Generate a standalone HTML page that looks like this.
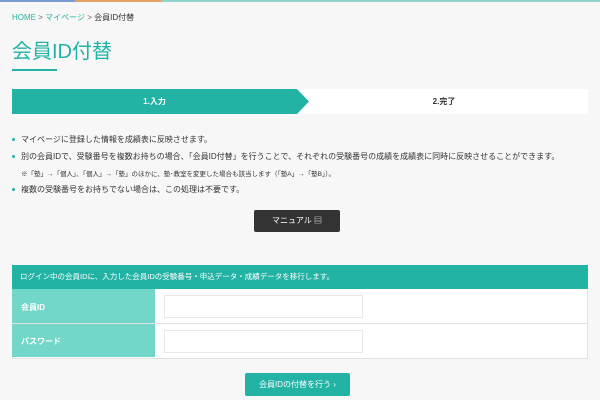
<html><head><style>
body{margin:0;width:600px;height:400px;background:#f7f7f7;font-family:"Liberation Sans","Noto Sans CJK JP",sans-serif;position:relative;overflow:hidden;color:#333}
.a{position:absolute}
.bul{position:absolute;left:21px;font-size:8px;white-space:nowrap}
.bul:before{content:"";position:absolute;left:-9px;top:4px;width:3px;height:3px;border-radius:50%;background:#22b3a5}
</style></head><body>
<div class="a" style="left:0;top:0;width:75px;height:2px;background:#7b9bd6"></div>
<div class="a" style="left:75px;top:0;width:86px;height:2px;background:#e8a068"></div>
<div class="a" style="left:161px;top:0;width:439px;height:2px;background:#8fd3cb"></div>
<div class="a" style="left:12px;top:12px;font-size:8px;color:#22b3a5;white-space:nowrap">HOME <span style="color:#666">&gt;</span> マイページ <span style="color:#666">&gt;</span> <span style="color:#333">会員ID付替</span></div>
<div class="a" style="left:12px;top:35px;font-size:20px;color:#22b3a5">会員ID付替</div>
<div class="a" style="left:12px;top:69px;width:45px;height:2px;background:#22b3a5"></div>
<div class="a" style="left:12px;top:89px;width:576px;height:25px;background:#fff"></div>
<svg class="a" style="left:12px;top:89px" width="298" height="25"><polygon points="0,0 285,0 297,12.5 285,25 0,25" fill="#22b3a5"/></svg>
<div class="a" style="left:12px;top:96px;width:285px;text-align:center;font-size:8px;font-weight:bold;color:#fff">1.入力</div>
<div class="a" style="left:300px;top:96px;width:288px;text-align:center;font-size:8px;font-weight:bold;color:#333">2.完了</div>
<div class="bul" style="top:134px">マイページに登録した情報を成績表に反映させます。</div>
<div class="bul" style="top:151px">別の会員IDで、受験番号を複数お持ちの場合、「会員ID付替」を行うことで、それぞれの受験番号の成績を成績表に同時に反映させることができます。</div>
<div class="a" style="left:21px;top:168px;font-size:6.5px;white-space:nowrap">※「塾」→「個人」、「個人」→「塾」のほかに、塾･教室を変更した場合も該当します（「塾A」→「塾B」）。</div>
<div class="bul" style="top:184px">複数の受験番号をお持ちでない場合は、この処理は不要です。</div>
<div class="a" style="left:254px;top:210px;width:86px;height:22px;background:#333;border-radius:2px;color:#fff;font-size:8px;text-align:center;line-height:22px">マニュアル ▤</div>
<div class="a" style="left:12px;top:265px;width:574px;height:92px;border:1px solid #e2e2e2;background:#fff"></div>
<div class="a" style="left:12px;top:265px;width:576px;height:24px;background:#22b3a5;color:#fff;font-size:7.5px;line-height:24px;text-indent:8px">ログイン中の会員IDに、入力した会員IDの受験番号・申込データ・成績データを移行します。</div>
<div class="a" style="left:12px;top:289px;width:143px;height:68px;background:#72d6c9"></div>
<div class="a" style="left:12px;top:323px;width:576px;height:1px;background:#e2e2e2"></div>
<div class="a" style="left:21px;top:302px;font-size:8px;font-weight:bold;color:#fff">会員ID</div>
<div class="a" style="left:21px;top:336px;font-size:8px;font-weight:bold;color:#fff">パスワード</div>
<div class="a" style="left:164px;top:295px;width:197px;height:21px;border:1px solid #e8e8e8;background:#fff"></div>
<div class="a" style="left:164px;top:330px;width:197px;height:21px;border:1px solid #e8e8e8;background:#fff"></div>
<div class="a" style="left:245px;top:373px;width:105px;height:23px;background:#22b3a5;border-radius:2px;color:#fff;font-size:8px;text-align:center;line-height:23px">会員IDの付替を行う ›</div>
</body></html>
